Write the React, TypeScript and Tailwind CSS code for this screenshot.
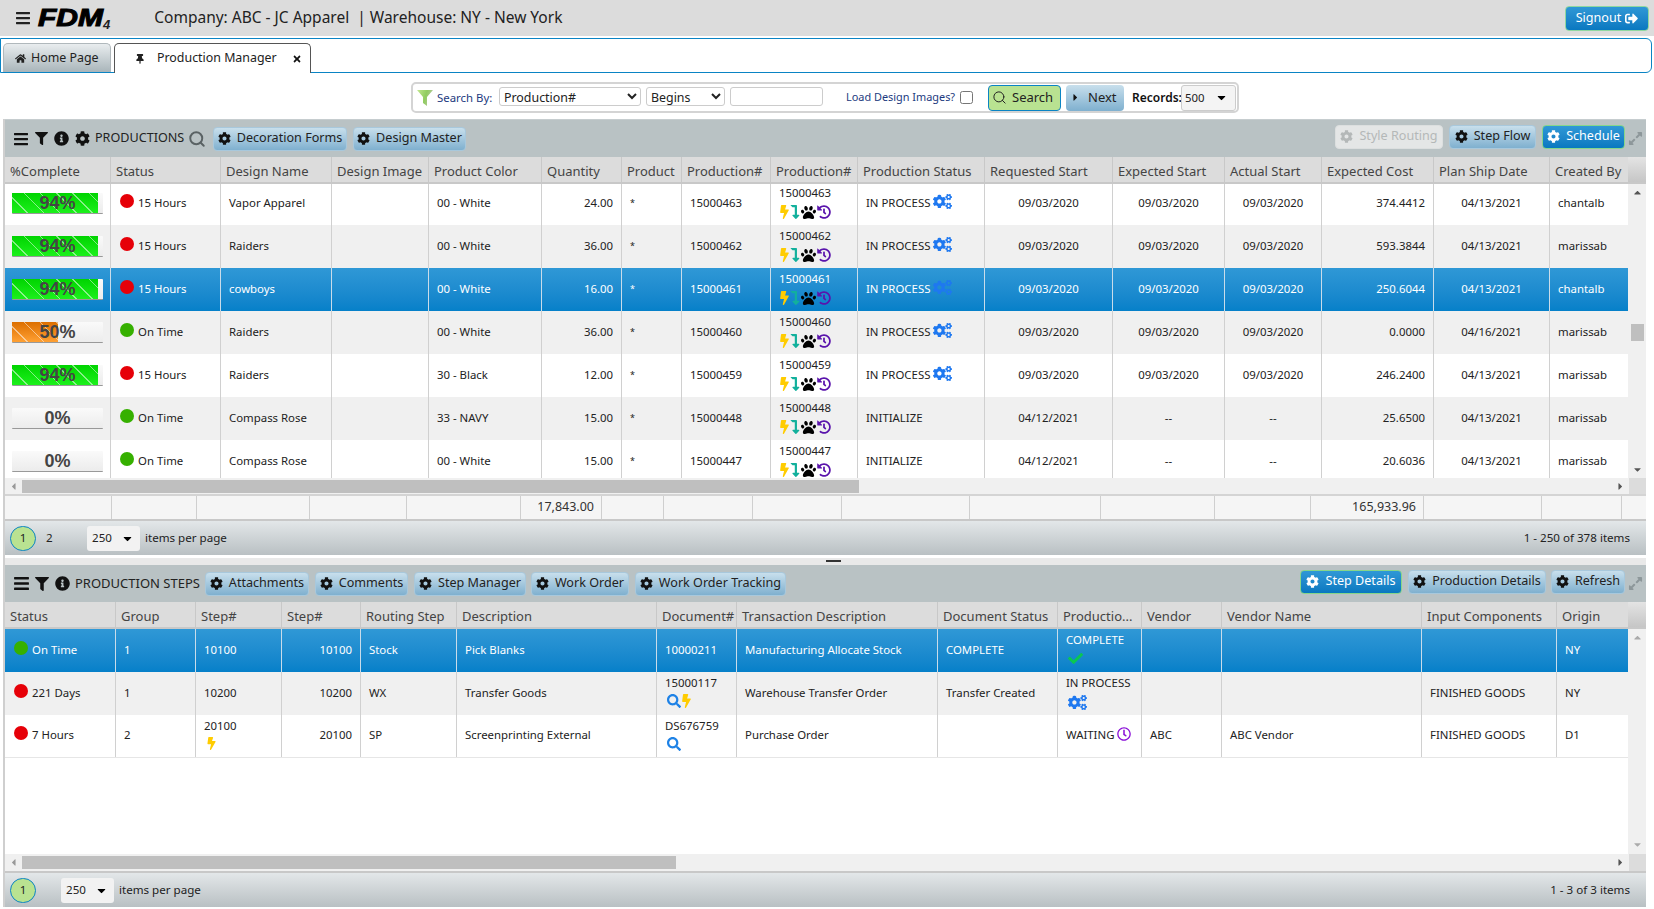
import React from "react";
import {
  FaBars, FaFilter, FaInfoCircle, FaCog, FaCogs, FaSearch, FaBolt, FaLevelDownAlt, FaPaw, FaHistory,
  FaHome, FaThumbtack, FaTimes, FaSignOutAlt, FaExpandAlt, FaCaretRight, FaCaretDown, FaCaretLeft, FaCaretUp,
  FaCheck, FaRegClock,
} from "react-icons/fa";
import { Search } from "lucide-react";

const FONT = "[font-family:'Noto_Sans','Open_Sans',sans-serif]";
const P1 = "grid grid-cols-[106px_110px_111px_97px_113px_80px_60px_89px_87px_127px_128px_112px_97px_112px_116px_78px]";
const P1T = "grid grid-cols-[107px_85px_113px_97px_114px_81px_62px_89px_89px_128px_131px_114px_96px_113px_118px_80px_23px]";
const P2 = "grid grid-cols-[111px_80px_86px_79px_96px_200px_80px_201px_120px_84px_80px_200px_135px_71px]";

function Btn({ label, w, kind = "normal" }: { label: string; w: string; kind?: "normal" | "primary" | "disabled" }) {
  const styles = {
    normal: "bg-gradient-to-b from-[#c8dfec] to-[#7fb0cf] text-[#222] border-[#a8c8dc]",
    primary: "bg-gradient-to-b from-[#2f98d6] to-[#0878c0] text-white border-[#86d68a]",
    disabled: "bg-[#e4e6e6] text-[#b4b8b8] border-[#dcdfdf]",
  }[kind];
  const icon = { normal: "text-[#111]", primary: "text-white", disabled: "text-[#b4b8b8]" }[kind];
  return (
    <div className={`${w} h-[24px] flex items-center justify-center gap-[6px] rounded-[4px] border text-[12.6px] leading-none whitespace-nowrap ${styles}`}>
      <FaCog className={`${icon} text-[13px] shrink-0`} />
      <span>{label}</span>
    </div>
  );
}

function Progress({ pct }: { pct: number }) {
  const fill =
    pct >= 90
      ? "bg-[repeating-linear-gradient(45deg,transparent_0,transparent_10.5px,rgba(255,255,255,.5)_10.5px,rgba(255,255,255,.5)_11.5px),linear-gradient(#00d400,#1cf01c)]"
      : "bg-[repeating-linear-gradient(45deg,transparent_0,transparent_10.5px,rgba(255,255,255,.5)_10.5px,rgba(255,255,255,.5)_11.5px),linear-gradient(#dc6f00,#ffa033)]";
  return (
    <div className="relative w-[91px] h-[21px] ml-[7px] bg-gradient-to-b from-[#fafafa] to-[#ececec] border-b border-[#999] rounded-[1px]">
      <div className={`h-full ${fill}`} style={{ width: `${pct}%` }} />
      <div className="absolute inset-0 flex items-center justify-center text-[18px] font-bold text-[#444] leading-none [font-family:'Liberation_Sans',sans-serif]">
        {pct}%
      </div>
    </div>
  );
}

function Dot({ color, text }: { color: string; text: string }) {
  return (
    <div className="flex items-center pl-[1px] gap-[4px]">
      <span className={`w-[14px] h-[14px] rounded-full shrink-0 -mt-[3px] ${color}`} />
      <span>{text}</span>
    </div>
  );
}

const RED = "bg-[#e60008]";
const GREEN = "bg-[#36b000]";

function Gears() {
  return <FaCogs className="text-[#1e78f0] text-[19px] shrink-0" />;
}

function RowIcons() {
  return (
    <div className="flex items-center h-[14px] mt-[4px]">
      <FaBolt className="text-[#ffcc00] text-[14px] w-[11px]" />
      <FaLevelDownAlt className="text-[#12b09c] text-[14px] w-[10px]" />
      <FaPaw className="text-black text-[15px] ml-[1px]" />
      <FaHistory className="text-[#5a14ac] text-[14px] ml-[1px]" />
    </div>
  );
}

type Align = "l" | "r" | "c";
function Cell({ children, align = "l", last, stack, sel }: { children?: React.ReactNode; align?: Align; last?: boolean; stack?: boolean; sel?: boolean }) {
  const a = align === "r" ? "justify-end pr-[8px] pl-[4px]" : align === "c" ? "justify-center" : "pl-[8px] pr-[2px]";
  return (
    <div className={`flex ${stack ? "flex-col justify-start pl-[8px] pt-[3px]" : `items-center pb-[2px] ${a}`} min-w-0 overflow-hidden whitespace-nowrap ${last ? "" : sel ? "border-r border-[#c9dcea]" : "border-r border-[#d0d0d0]"}`}>
      {children}
    </div>
  );
}

function HeadCell({ children, last }: { children?: React.ReactNode; last?: boolean }) {
  return (
    <div className={`flex items-center pl-[5px] pt-[5px] overflow-hidden whitespace-nowrap ${last ? "" : "border-r border-[#c8c8c8]"}`}>
      {children}
    </div>
  );
}

const rowBg = (sel: boolean, alt: boolean) =>
  sel ? "bg-gradient-to-b from-[#2f98d6] to-[#0580c9] text-white" : alt ? "bg-[#f0f0f0] text-[#222]" : "bg-white text-[#222]";

const productions = [
  { pct: 94, dot: RED, st: "15 Hours", name: "Vapor Apparel", color: "00 - White", q: "24.00", p: "15000463", ps: "IN PROCESS", rs: "09/03/2020", es: "09/03/2020", as: "09/03/2020", c: "374.4412", ship: "04/13/2021", by: "chantalb" },
  { pct: 94, dot: RED, st: "15 Hours", name: "Raiders", color: "00 - White", q: "36.00", p: "15000462", ps: "IN PROCESS", rs: "09/03/2020", es: "09/03/2020", as: "09/03/2020", c: "593.3844", ship: "04/13/2021", by: "marissab" },
  { pct: 94, dot: RED, st: "15 Hours", name: "cowboys", color: "00 - White", q: "16.00", p: "15000461", ps: "IN PROCESS", rs: "09/03/2020", es: "09/03/2020", as: "09/03/2020", c: "250.6044", ship: "04/13/2021", by: "chantalb" },
  { pct: 50, dot: GREEN, st: "On Time", name: "Raiders", color: "00 - White", q: "36.00", p: "15000460", ps: "IN PROCESS", rs: "09/03/2020", es: "09/03/2020", as: "09/03/2020", c: "0.0000", ship: "04/16/2021", by: "marissab" },
  { pct: 94, dot: RED, st: "15 Hours", name: "Raiders", color: "30 - Black", q: "12.00", p: "15000459", ps: "IN PROCESS", rs: "09/03/2020", es: "09/03/2020", as: "09/03/2020", c: "246.2400", ship: "04/13/2021", by: "marissab" },
  { pct: 0, dot: GREEN, st: "On Time", name: "Compass Rose", color: "33 - NAVY", q: "15.00", p: "15000448", ps: "INITIALIZE", rs: "04/12/2021", es: "--", as: "--", c: "25.6500", ship: "04/13/2021", by: "marissab" },
  { pct: 0, dot: GREEN, st: "On Time", name: "Compass Rose", color: "00 - White", q: "15.00", p: "15000447", ps: "INITIALIZE", rs: "04/12/2021", es: "--", as: "--", c: "20.6036", ship: "04/13/2021", by: "marissab" },
];

const headers1 = ["%Complete", "Status", "Design Name", "Design Image", "Product Color", "Quantity", "Product", "Production#", "Production#", "Production Status", "Requested Start", "Expected Start", "Actual Start", "Expected Cost", "Plan Ship Date", "Created By"];
const headers2 = ["Status", "Group", "Step#", "Step#", "Routing Step", "Description", "Document#", "Transaction Description", "Document Status", "Productio...", "Vendor", "Vendor Name", "Input Components", "Origin"];

function Expand() {
  return <FaExpandAlt className="text-[#8d979a] text-[15px] ml-[3px] mr-[2px]" />;
}

function HScroll({ thumb, h }: { thumb: string; h: string }) {
  return (
    <div className={`flex ${h} bg-[#f0f0f0] items-stretch`}>
      <div className="w-[17px] flex items-center justify-center text-[#999] text-[11px]"><FaCaretLeft /></div>
      <div className="flex items-center"><div className={`${thumb} h-[13px] bg-[#bfbfbf]`} /></div>
      <div className="flex-1" />
      <div className="w-[17px] flex items-center justify-center text-[#555] text-[11px]"><FaCaretRight /></div>
      <div className="w-[17px] bg-[#dcdcdc]" />
    </div>
  );
}

function Pager({ h, pages, sel, info }: { h: string; pages: string[]; sel: string; info: string }) {
  return (
    <div className={`flex items-center ${h} bg-gradient-to-b from-[#e3e7e9] to-[#b9c0c3] border-t-2 border-[#c8c8c8] pl-[5px] pr-[16px] text-[11.6px] text-[#222]`}>
      <div className="w-[26px] h-[25px] rounded-full bg-[#b9e291] border border-[#0a84c4] flex items-center justify-center">1</div>
      {pages.length > 1 && <span className="ml-[10px] w-[28px]">2</span>}
      <div className={`${pages.length > 1 ? "ml-[13px]" : "ml-[25px]"} w-[53px] h-[25px] rounded-[3px] bg-[#f2f2f2] flex items-center pl-[5px] pr-[6px] justify-between`}>
        <span>{sel}</span>
        <FaCaretDown className="text-black text-[13px]" />
      </div>
      <span className="ml-[5px]">items per page</span>
      <span className="ml-auto">{info}</span>
    </div>
  );
}

function Head({ cols, labels }: { cols: string; labels: string[] }) {
  return (
    <div className="flex h-[27px] bg-[#dcdcdc] border-b-2 border-[#c8c8c8] text-[13px] text-[#444]">
      <div className={`${cols} w-[1623px] shrink-0`}>
        {labels.map((l, i) => (
          <HeadCell key={i} last={i === labels.length - 1}>{l}</HeadCell>
        ))}
      </div>
      <div className="flex-1 bg-gradient-to-b from-[#e4e4e4] to-[#c6c6c6]" />
    </div>
  );
}

export default function App() {
  return (
    <div className={`w-[1654px] h-[909px] overflow-hidden bg-white text-[11.4px] text-[#222] ${FONT}`}>
      {/* top bar */}
      <div className="h-[36px] bg-[#dcdcdc] flex items-center pl-[15px] pr-[5px]">
        <FaBars className="text-[#222] text-[16px]" />
        <div className="ml-[7px] w-[65px] shrink-0 text-[24px] leading-none font-bold italic text-black [font-family:'Liberation_Sans',sans-serif] origin-left scale-x-[1.25] [-webkit-text-stroke:1px_black]">FDM</div>
        <div className="mt-[12px] text-[13px] leading-none font-bold italic text-[#222] [font-family:'Liberation_Sans',sans-serif]">4</div>
        <div className="ml-[44px] text-[15.5px] text-[#222] whitespace-pre">Company: ABC - JC Apparel  | Warehouse: NY - New York</div>
        <div className="ml-auto w-[84px] h-[25px] rounded-[4px] border border-[#8fd8a0] bg-gradient-to-b from-[#2f98d6] to-[#0878c0] text-white text-[12.6px] flex items-center justify-center gap-[4px]">
          Signout <FaSignOutAlt className="text-[13px]" />
        </div>
      </div>

      {/* tabs */}
      <div className="mt-[2px] w-[1652px] h-[35px] border border-[#0a84c4] rounded-r-[6px] flex items-end pl-[2px] gap-[3px] text-[12.4px]">
        <div className="w-[108px] h-[29px] rounded-t-[5px] border border-b-0 border-[#b0b8bc] bg-gradient-to-b from-[#e9edef] to-[#a9b5ba] flex items-center pl-[11px] gap-[5px]">
          <FaHome className="text-[11px] text-[#222]" /> Home Page
        </div>
        <div className="w-[197px] h-[30px] -mb-px rounded-t-[5px] border border-b-0 border-[#555] bg-white flex items-center">
          <FaThumbtack className="ml-[20px] text-[10px] text-[#222]" />
          <span className="ml-[12px] whitespace-nowrap">Production Manager</span>
          <FaTimes className="ml-auto mr-[8px] text-[10px] text-[#111]" />
        </div>
      </div>

      {/* search */}
      <div className="mt-[9px] ml-[411px] w-[828px] h-[31px] border-2 border-[#d4d4d4] rounded-[5px] flex items-center text-[11.4px]">
        <svg width="16" height="16" viewBox="0 0 16 16" className="ml-[4px] shrink-0">
          <defs>
            <linearGradient id="fg" x1="0" y1="0" x2="1" y2="0.3">
              <stop offset="0" stopColor="#c4e890" />
              <stop offset="0.6" stopColor="#90cc60" />
              <stop offset="1" stopColor="#b8c8a0" />
            </linearGradient>
          </defs>
          <path d="M0 0H16L10 7V16L6 13V7Z" fill="url(#fg)" />
        </svg>
        <span className="ml-[4px] w-[55px] text-[#1c3a80] whitespace-nowrap">Search By:</span>
        <select defaultValue="Production#" className="ml-[7px] -mt-[2px] w-[142px] h-[19px] border border-[#ccc] rounded-[3px] bg-white text-[12.4px] leading-none">
          <option>Production#</option>
        </select>
        <select defaultValue="Begins" className="ml-[5px] -mt-[2px] w-[79px] h-[19px] border border-[#ccc] rounded-[3px] bg-white text-[12.4px] leading-none">
          <option>Begins</option>
        </select>
        <input className="ml-[5px] -mt-[2px] w-[93px] h-[19px] border border-[#ccc] rounded-[3px] bg-white" />
        <span className="ml-[23px] w-[110px] text-[#1c3a80] text-[10.9px] whitespace-nowrap">Load Design Images?</span>
        <input type="checkbox" className="ml-[4px] w-[13px] h-[13px]" />
        <div className="ml-[15px] w-[73px] h-[26px] rounded-[4px] border border-[#0a84c4] bg-[#b9e291] flex items-center pl-[3px] gap-[5px] text-[13px]">
          <Search size={15} strokeWidth={1.6} className="text-[#222]" /> Search
        </div>
        <div className="ml-[5px] w-[58px] h-[26px] rounded-[4px] bg-gradient-to-b from-[#c8dfec] to-[#7fb0cf] flex items-center pl-[4px] gap-[7px] text-[13px]">
          <FaCaretRight className="text-[#111] text-[11px]" /> Next
        </div>
        <span className="ml-[8px] w-[48px] font-semibold text-[12px] text-[#111] whitespace-nowrap">Records:</span>
        <div className="ml-[1px] w-[55px] h-[26px] rounded-[3px] border border-[#ccc] bg-[#f4f4f4] flex items-center justify-between pl-[3px] pr-[7px]">
          <span>500</span>
          <FaCaretDown className="text-black text-[13px]" />
        </div>
      </div>

      {/* panel 1 */}
      <div className="mt-[6px] ml-[3px] w-[1643px] border-l-2 border-[#cfcfcf]">
        <div className="h-[38px] bg-[#b9c2c4] border-t border-[#c6cdcf] flex items-center pl-[8px] pr-[1px] text-[#111]">
          <FaBars className="text-[16px]" />
          <FaFilter className="text-[13px] ml-[6px]" />
          <FaInfoCircle className="text-[15px] ml-[6px]" />
          <FaCog className="text-[15px] ml-[6px]" />
          <span className="ml-[5px] w-[90px] text-[12.6px] text-[#222]">PRODUCTIONS</span>
          <Search size={18} strokeWidth={2.6} className="ml-[3px] text-[#5a6264]" />
          <div className="ml-[7px]"><Btn label="Decoration Forms" w="w-[134px]" /></div>
          <div className="ml-[6px]"><Btn label="Design Master" w="w-[113px]" /></div>
          <div className="ml-auto -mt-[4px]"><Btn label="Style Routing" w="w-[108px]" kind="disabled" /></div>
          <div className="ml-[6px] -mt-[4px]"><Btn label="Step Flow" w="w-[87px]" /></div>
          <div className="ml-[6px] -mt-[4px]"><Btn label="Schedule" w="w-[83px]" kind="primary" /></div>
          <Expand />
        </div>
        <Head cols={P1} labels={headers1} />
        <div className="flex h-[294px] overflow-hidden">
          <div className="w-[1623px] shrink-0">
            <div className="-mt-[2px]">
              {productions.map((r, i) => {
                const sel = i === 2;
                const alt = i % 2 === 1;
                return (
                  <div key={i} className={`${P1} h-[43px] ${rowBg(sel, alt)}`}>
                    <div className={`flex items-center ${sel ? "border-r border-[#c9dcea]" : "border-r border-[#d0d0d0]"}`}><Progress pct={r.pct} /></div>
                    <Cell sel={sel}><Dot color={r.dot} text={r.st} /></Cell>
                    <Cell sel={sel}>{r.name}</Cell>
                    <Cell sel={sel} />
                    <Cell sel={sel}>{r.color}</Cell>
                    <Cell sel={sel} align="r">{r.q}</Cell>
                    <Cell sel={sel}><span className="text-[9px]">*</span></Cell>
                    <Cell sel={sel}>{r.p}</Cell>
                    <Cell sel={sel} stack><div className="leading-[16px]">{r.p}</div><RowIcons /></Cell>
                    <Cell sel={sel}>
                      <span>{r.ps}</span>
                      {r.ps === "IN PROCESS" && <span className="ml-[3px] -mt-[2px]"><Gears /></span>}
                    </Cell>
                    <Cell sel={sel} align="c">{r.rs}</Cell>
                    <Cell sel={sel} align="c">{r.es}</Cell>
                    <Cell sel={sel} align="c">{r.as}</Cell>
                    <Cell sel={sel} align="r">{r.c}</Cell>
                    <Cell sel={sel} align="c">{r.ship}</Cell>
                    <Cell sel={sel} last>{r.by}</Cell>
                  </div>
                );
              })}
            </div>
          </div>
          <div className="flex-1 bg-[#f0f0f0] flex flex-col items-center text-[11px] text-[#555]">
            <FaCaretUp className="mt-[3px]" />
            <div className="mt-[126px] w-[13px] h-[17px] bg-[#bfbfbf]" />
            <FaCaretDown className="mt-auto mb-[3px]" />
          </div>
        </div>
        <HScroll thumb="w-[837px]" h="h-[16px]" />
        <div className={`${P1T} h-[25px] bg-[#f5f5f5] border-t-2 border-[#d4d4d4] text-[12.5px] text-[#333]`}>
          {Array.from({ length: 17 }).map((_, i) => (
            <div key={i} className={`flex items-center justify-end pr-[7px] ${i === 16 ? "" : "border-r border-[#cfcfcf]"}`}>
              {i === 5 ? "17,843.00" : i === 13 ? "165,933.96" : ""}
            </div>
          ))}
        </div>
        <Pager h="h-[36px]" pages={["1", "2"]} sel="250" info="1 - 250 of 378 items" />

        {/* splitter */}
        <div className="mt-[3px] h-[7px] bg-[#e9e9e9] flex items-center justify-center">
          <div className="ml-[16px] -mt-[1px] w-[15px] h-[2px] bg-[#333]" />
        </div>

        {/* panel 2 */}
        <div className="h-[37px] bg-[#b9c2c4] flex items-center pl-[8px] pr-[1px] text-[#111]">
          <FaBars className="text-[17px]" />
          <FaFilter className="text-[14px] ml-[5px]" />
          <FaInfoCircle className="text-[15px] ml-[6px]" />
          <span className="ml-[5px] text-[13px] text-[#222] whitespace-nowrap">PRODUCTION STEPS</span>
          <div className="ml-[5px]"><Btn label="Attachments" w="w-[104px]" /></div>
          <div className="ml-[6px]"><Btn label="Comments" w="w-[93px]" /></div>
          <div className="ml-[6px]"><Btn label="Step Manager" w="w-[112px]" /></div>
          <div className="ml-[5px]"><Btn label="Work Order" w="w-[98px]" /></div>
          <div className="ml-[6px]"><Btn label="Work Order Tracking" w="w-[151px]" /></div>
          <div className="ml-auto -mt-[4px]"><Btn label="Step Details" w="w-[102px]" kind="primary" /></div>
          <div className="ml-[6px] -mt-[4px]"><Btn label="Production Details" w="w-[138px]" /></div>
          <div className="ml-[5px] -mt-[4px]"><Btn label="Refresh" w="w-[74px]" /></div>
          <Expand />
        </div>
        <Head cols={P2} labels={headers2} />
        <div className="flex h-[225px] overflow-hidden">
          <div className="w-[1623px] shrink-0">
            <div className={`${P2} h-[43px] ${rowBg(true, false)}`}>
              <Cell sel><Dot color={GREEN} text="On Time" /></Cell>
              <Cell sel>1</Cell>
              <Cell sel>10100</Cell>
              <Cell sel align="r">10100</Cell>
              <Cell sel>Stock</Cell>
              <Cell sel>Pick Blanks</Cell>
              <Cell sel>10000211</Cell>
              <Cell sel>Manufacturing Allocate Stock</Cell>
              <Cell sel>COMPLETE</Cell>
              <Cell sel stack><div className="leading-[16px]">COMPLETE</div><FaCheck className="text-[#0ac850] text-[15px] mt-[3px] ml-[2px]" /></Cell>
              <Cell sel /><Cell sel /><Cell sel />
              <Cell sel last>NY</Cell>
            </div>
            <div className={`${P2} h-[43px] ${rowBg(false, true)}`}>
              <Cell><Dot color={RED} text="221 Days" /></Cell>
              <Cell>1</Cell>
              <Cell>10200</Cell>
              <Cell align="r">10200</Cell>
              <Cell>WX</Cell>
              <Cell>Transfer Goods</Cell>
              <Cell stack><div className="leading-[16px]">15000117</div><div className="flex items-center gap-[1px] mt-[3px] ml-[2px]"><FaSearch className="text-[#1e82e6] text-[14px]" /><FaBolt className="text-[#ffcc00] text-[14px] w-[9px]" /></div></Cell>
              <Cell>Warehouse Transfer Order</Cell>
              <Cell>Transfer Created</Cell>
              <Cell stack><div className="leading-[16px]">IN PROCESS</div><div className="mt-[2px] ml-[2px]"><Gears /></div></Cell>
              <Cell /><Cell />
              <Cell>FINISHED GOODS</Cell>
              <Cell last>NY</Cell>
            </div>
            <div className={`${P2} h-[43px] border-b border-[#e6e6e6] ${rowBg(false, false)}`}>
              <Cell><Dot color={RED} text="7 Hours" /></Cell>
              <Cell>2</Cell>
              <Cell stack><div className="leading-[16px]">20100</div><FaBolt className="text-[#ffcc00] text-[13px] mt-[3px] ml-[1px]" /></Cell>
              <Cell align="r">20100</Cell>
              <Cell>SP</Cell>
              <Cell>Screenprinting External</Cell>
              <Cell stack><div className="leading-[16px]">DS676759</div><FaSearch className="text-[#1e82e6] text-[14px] mt-[3px] ml-[2px]" /></Cell>
              <Cell>Purchase Order</Cell>
              <Cell />
              <Cell><span>WAITING</span><FaRegClock className="ml-[3px] -mt-[2px] text-[#8a10d8] text-[14px]" /></Cell>
              <Cell>ABC</Cell>
              <Cell>ABC Vendor</Cell>
              <Cell>FINISHED GOODS</Cell>
              <Cell last>D1</Cell>
            </div>
          </div>
          <div className="flex-1 bg-[#f0f0f0] flex flex-col items-center text-[11px] text-[#aaa]">
            <FaCaretUp className="mt-[3px]" />
            <FaCaretDown className="mt-auto mb-[4px]" />
          </div>
        </div>
        <HScroll thumb="w-[654px]" h="h-[17px]" />
        <Pager h="h-[36px]" pages={["1"]} sel="250" info="1 - 3 of 3 items" />
      </div>
    </div>
  );
}
